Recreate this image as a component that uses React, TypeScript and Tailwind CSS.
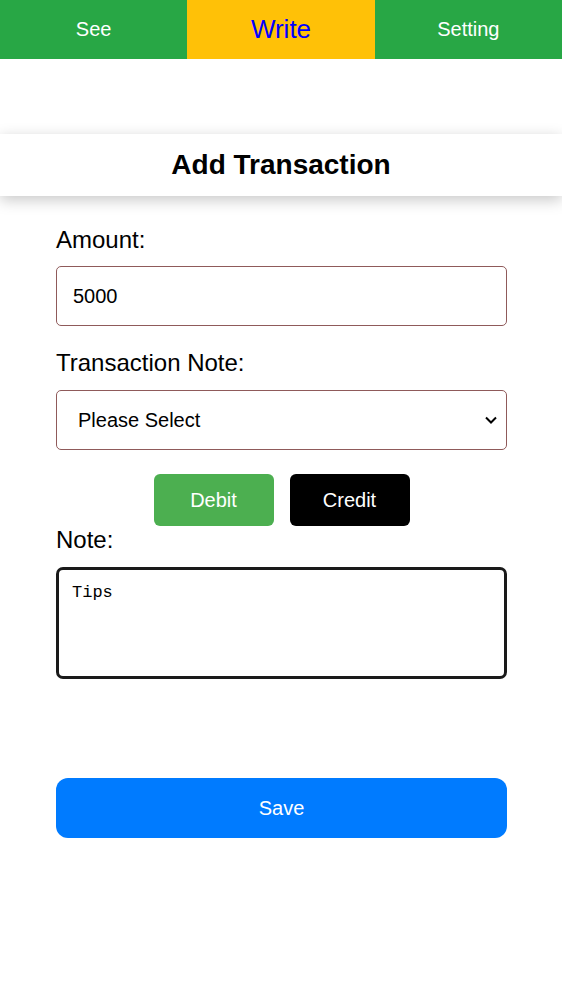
import { useState } from 'react'

export default function App() {
  const [amount, setAmount] = useState('5000')
  const [category, setCategory] = useState('')
  const [note, setNote] = useState('Tips')

  return (
    <div className="min-h-[995px] bg-white font-['Liberation_Sans',Arial,sans-serif] text-black">
      {/* Top tabs */}
      <nav className="grid h-[59px] grid-cols-3">
        <button type="button" className="flex items-center justify-center bg-[#28a745] pb-px text-[20px] text-white">
          See
        </button>
        <button type="button" className="flex items-center justify-center bg-[#ffc107] pb-px text-[26px] text-[#0000ff]">
          Write
        </button>
        <button type="button" className="flex items-center justify-center bg-[#28a745] pb-px text-[20px] text-white">
          Setting
        </button>
      </nav>

      <div className="mt-[75px] flex h-[62px] items-center justify-center bg-white pb-px shadow-[0_4px_14px_rgba(0,0,0,0.22)]">
        <h2 className="text-[28px] font-bold">Add Transaction</h2>
      </div>

      <form className="pl-14 pr-[55px] pt-[30px]" onSubmit={(e) => e.preventDefault()}>
        <label className="block text-[24px] leading-7">Amount:</label>
        <input
          value={amount}
          onChange={(e) => setAmount(e.target.value)}
          className="mt-3 block h-[60px] w-full rounded-[5px] border border-[#8f5a5a] px-4 text-[20px] outline-none"
        />

        <label className="mt-[23px] block text-[24px] leading-7">Transaction Note:</label>
        <div className="relative mt-[13px]">
          <select
            value={category}
            onChange={(e) => setCategory(e.target.value)}
            className="block h-[60px] w-full appearance-none rounded-[5px] border border-[#8f5a5a] bg-white pl-[21px] pr-10 text-[20px] outline-none"
          >
            <option value="">Please Select</option>
            <option value="food">Food</option>
            <option value="salary">Salary</option>
          </select>
          <svg
            viewBox="0 0 12 8"
            className="pointer-events-none absolute right-[10px] top-[26px] h-[8px] w-[12px]"
            fill="none"
            stroke="black"
            strokeWidth="2"
          >
            <path d="M1 1.5 L6 6.5 L11 1.5" />
          </svg>
        </div>

        <div className="mt-6 flex justify-center gap-4">
          <button type="button" className="h-[52px] w-[120px] rounded-[6px] bg-[#4caf50] text-[20px] text-white">
            Debit
          </button>
          <button type="button" className="h-[52px] w-[120px] rounded-[6px] bg-black text-[20px] text-white">
            Credit
          </button>
        </div>

        <label className="block text-[24px] leading-7">Note:</label>
        <textarea
          value={note}
          onChange={(e) => setNote(e.target.value)}
          className="mt-[13px] block h-[112px] w-full resize-none rounded-[7px] border-[3px] border-[#1a1a1a] px-[13px] py-[10px] font-['Liberation_Mono',monospace] text-[17px] outline-none"
        />

        <button type="submit" className="mt-[99px] block h-[60px] w-full rounded-xl bg-[#007bff] text-[20px] text-white">
          Save
        </button>
      </form>
    </div>
  )
}
